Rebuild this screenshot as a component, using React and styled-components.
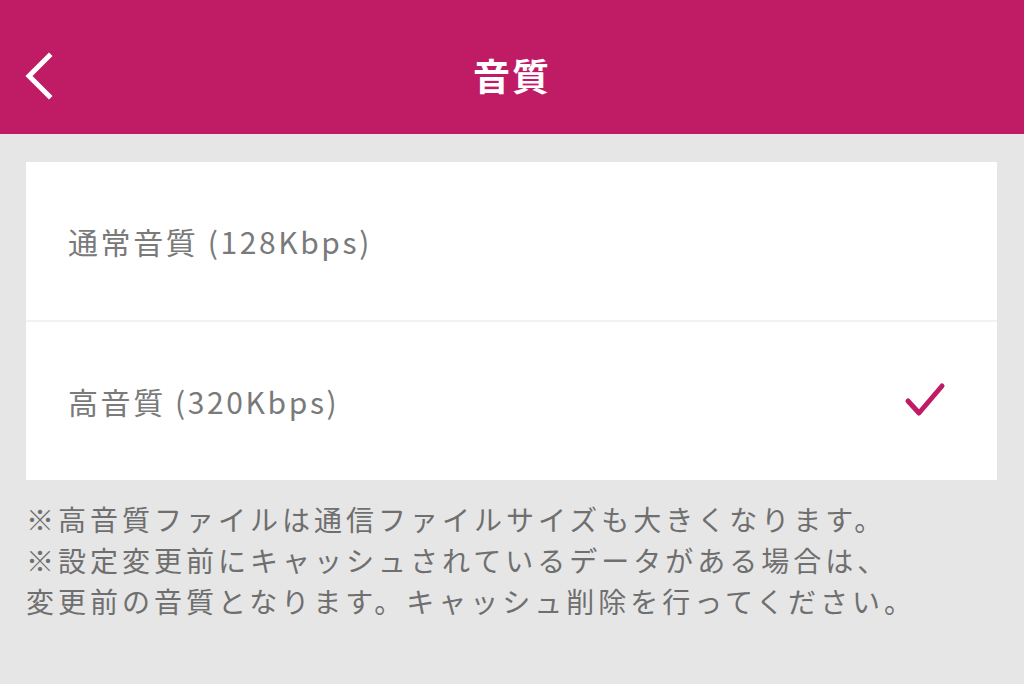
import React, { useState } from "react";
import styled, { createGlobalStyle } from "styled-components";

const GlobalStyle = createGlobalStyle`
  html, body {
    margin: 0;
    padding: 0;
    background: #e6e6e6;
    font-family: "Noto Sans CJK JP", "Noto Sans", sans-serif;
  }
`;

const options = [
  { id: "normal", label: "通常音質 (128Kbps)" },
  { id: "high", label: "高音質 (320Kbps)" },
];

function App() {
  const [selected, setSelected] = useState("high");

  return (
    <Page>
      <GlobalStyle />
      <Header>
        <BackButton aria-label="戻る">
          <svg width="30" height="48" viewBox="0 0 30 48">
            <polyline points="25,4 5,24 25,44" fill="none" stroke="#fff" strokeWidth="5" strokeLinecap="square" />
          </svg>
        </BackButton>
        <Title>音質</Title>
      </Header>
      <Body>
        <Card>
          {options.map((o, i) => (
            <Row key={o.id} first={i === 0} onClick={() => setSelected(o.id)}>
              <Label>{o.label}</Label>
              {selected === o.id && (
                <svg width="44" height="40" viewBox="0 0 44 40">
                  <polyline points="5,20 16,32 39,5" fill="none" stroke="#c01c66" strokeWidth="5" strokeLinecap="round" strokeLinejoin="round" />
                </svg>
              )}
            </Row>
          ))}
        </Card>
        <Note>
          ※高音質ファイルは通信ファイルサイズも大きくなります。<br />
          ※設定変更前にキャッシュされているデータがある場合は、<br />
          変更前の音質となります。キャッシュ削除を行ってください。
        </Note>
      </Body>
    </Page>
  );
}

const Page = styled.div`
  width: 1024px;
  min-height: 684px;
  background: #e6e6e6;
`;

const Header = styled.div`
  height: 134px;
  box-sizing: border-box;
  padding-top: 16px;
  background: #c01c66;
  display: flex;
  align-items: center;
  justify-content: center;
  position: relative;
`;

const BackButton = styled.button`
  position: absolute;
  left: 24px;
  top: 52px;
  padding: 0;
  border: none;
  background: none;
  cursor: pointer;
  display: flex;
`;

const Title = styled.div`
  color: #fff;
  font-size: 37px;
  font-weight: bold;
  letter-spacing: 2px;
`;

const Body = styled.div`
  padding: 28px 27px 0 26px;
`;

const Card = styled.div`
  background: #fff;
  display: flex;
  flex-direction: column;
`;

const Row = styled.div`
  height: 158px;
  display: flex;
  align-items: center;
  justify-content: space-between;
  padding: 0 50px 0 42px;
  border-top: ${(p) => (p.first ? "none" : "2px solid #f2f2f2")};
  cursor: pointer;
`;

const Label = styled.div`
  font-size: 30px;
  color: #7a7a7a;
  letter-spacing: 2.6px;
`;

const Note = styled.div`
  margin-top: 19px;
  font-size: 28px;
  line-height: 41px;
  color: #6f6f6f;
  letter-spacing: 4px;
  white-space: nowrap;
`;

export default App;
